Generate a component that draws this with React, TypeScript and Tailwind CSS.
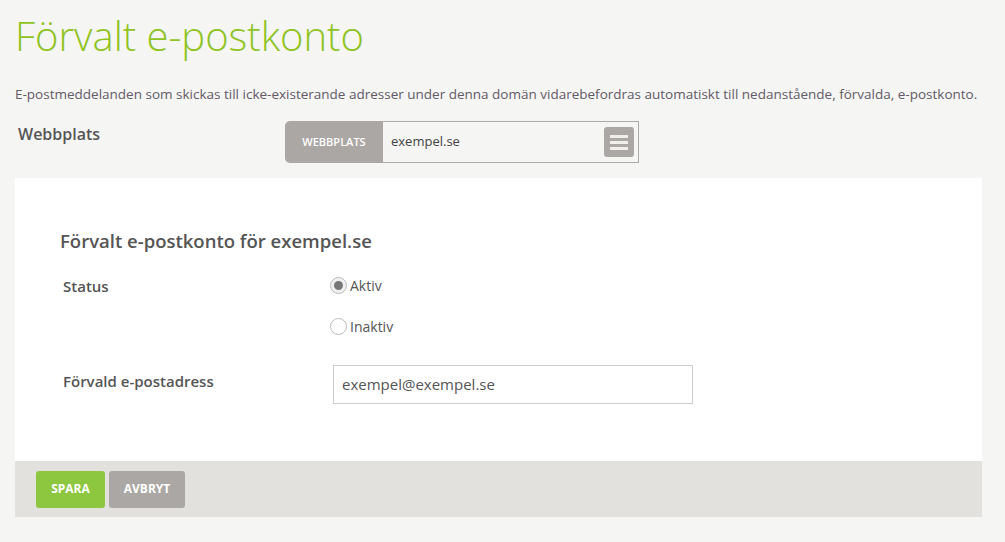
import React from "react";

export default function App() {
  const font = { fontFamily: '"Open Sans", "Noto Sans", sans-serif' };
  return (
    <div className="min-h-[542px] w-full bg-[#f5f5f4] text-[#5a5a5a]" style={font}>
      <div className="px-[15px] pt-[8px]">
        <h1 className="text-[40px] font-light leading-[56px] text-[#8fc31f]">Förvalt e-postkonto</h1>
        <p className="mt-[20px] text-[13.5px] leading-[20px] text-[#625a66]">
          E-postmeddelanden som skickas till icke-existerande adresser under denna domän vidarebefordras automatiskt till nedanstående, förvalda, e-postkonto.
        </p>
        <div className="mt-[17px] flex items-start">
          <div className="w-[270px] pl-[3px] pt-[1px] text-[16px] font-semibold leading-[24px] text-[#555]">Webbplats</div>
          <div className="flex h-[42px] w-[354px] overflow-hidden rounded-l-[5px]">
            <div className="flex w-[98px] items-center justify-center bg-[#aba7a4] text-[11px] font-semibold text-white">WEBBPLATS</div>
            <div className="flex flex-1 items-center justify-between border border-l-0 border-[#aaa] bg-[#f5f5f4] pl-[8px] pr-[4px]">
              <span className="text-[13px] text-[#444]">exempel.se</span>
              <div className="flex h-[30px] w-[30px] flex-col items-center justify-center gap-[3px] rounded-[3px] bg-[#aba7a4]">
                <div className="h-[3px] w-[18px] bg-[#f0efe9]" />
                <div className="h-[3px] w-[18px] bg-[#f0efe9]" />
                <div className="h-[3px] w-[18px] bg-[#f0efe9]" />
              </div>
            </div>
          </div>
        </div>
        <div className="mt-[15px] w-[967px] bg-white">
          <div className="px-[45px] pb-[57px] pt-[50px]">
            <h2 className="text-[18.5px] font-semibold leading-[26px] text-[#555]">Förvalt e-postkonto för exempel.se</h2>
            <div className="mt-[20px] flex">
              <div className="w-[270px] pl-[3px] pt-[1px] text-[15px] font-semibold text-[#555]">Status</div>
              <div className="flex flex-col gap-[20px] pt-[1px]">
                <label className="flex items-center gap-[3px] text-[14px] text-[#555]">
                  <span className="flex h-[17px] w-[17px] items-center justify-center rounded-full border border-[#bbb] bg-[#f0f0f0]">
                    <span className="h-[9px] w-[9px] rounded-full bg-[#777]" />
                  </span>
                  Aktiv
                </label>
                <label className="flex items-center gap-[3px] text-[14px] text-[#555]">
                  <span className="h-[17px] w-[17px] rounded-full border border-[#bbb] bg-white" />
                  Inaktiv
                </label>
              </div>
            </div>
            <div className="mt-[28px] flex items-start">
              <div className="w-[273px] pl-[3px] pt-[5px] text-[15px] font-semibold text-[#555]">Förvald e-postadress</div>
              <div className="flex h-[39px] w-[360px] items-center border border-[#ccc] px-[8px] text-[15px] text-[#555]">exempel@exempel.se</div>
            </div>
          </div>
          <div className="flex h-[56px] items-center gap-[4px] bg-[#e2e1de] px-[21px]">
            <button className="h-[37px] w-[69px] rounded-[3px] bg-[#8dc63f] text-[12px] font-bold text-white">SPARA</button>
            <button className="h-[37px] w-[76px] rounded-[3px] bg-[#aba7a4] text-[12px] font-bold text-white">AVBRYT</button>
          </div>
        </div>
      </div>
    </div>
  );
}
